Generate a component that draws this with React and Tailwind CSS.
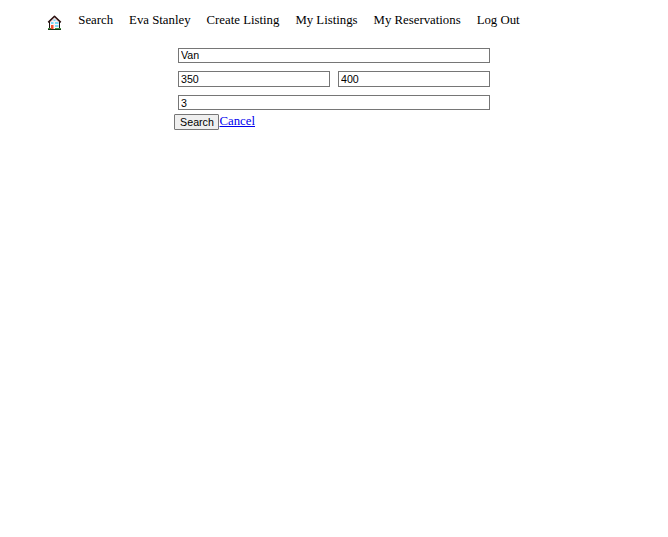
import React from "react";

const links = ["Search", "Eva Stanley", "Create Listing", "My Listings", "My Reservations", "Log Out"];

function House() {
  return (
    <svg width="15" height="15" viewBox="0 0 15 15" className="mt-[15px] block shrink-0" aria-label="Home">
      <path d="M2.500 6.500 7.500 2l5 4.500V14h-10z" fill="#faf3f5" />
      <path d="M2.500 7v7M12.500 7v7" stroke="#1c1212" strokeWidth="1" />
      <path d="M3.200 7 7.500 3l4.300 4" fill="none" stroke="#d9aaa8" strokeWidth="0.700" />
      <path d="M1.200 7.400 7.500 1.200l6.300 6.200" fill="none" stroke="#2a1010" strokeWidth="1.500" strokeLinejoin="round" />
      <path d="M6.500 4.500h2V6h-2zM4 7h2.500v2H4zM8 7h3.500v2H8zM8 10h3.500v2H8z" fill="#7bdcf8" />
      <path d="M4 10h2.500v4H4z" fill="#f2502f" />
      <path d="M1 13h3v1H1zM8 13h6v1H8z" fill="#3f9140" />
      <path d="M1 14.500h13" stroke="#173218" strokeWidth="1" />
    </svg>
  );
}

function Field({ value, className }) {
  return (
    <input
      type="text"
      defaultValue={value}
      className={`block min-w-0 flex-1 rounded-none border border-[#767676] bg-white px-[2px] pt-0 font-['Liberation_Sans',Arial,sans-serif] text-[10.667px] text-black outline-none ${className}`}
    />
  );
}

export default function App() {
  return (
    <div className="h-[537px] w-[668px] overflow-hidden bg-white font-['Liberation_Serif','Times_New_Roman',serif] text-[12.8px] leading-[15px] text-black">
      <nav className="flex h-12 items-start pl-[47px]">
        <House />
        <ul className="ml-[16.3px] mt-[13px] flex gap-[15.98px]">
          {links.map((label) => (
            <li key={label} className="whitespace-nowrap">
              <a href="#">{label}</a>
            </li>
          ))}
        </ul>
      </nav>
      <form className="ml-[174px] w-[320px]">
        <div className="flex flex-col gap-2 px-1">
          <div className="flex"><Field value="Van" className="h-[15px] pb-[2px] leading-[11px]" /></div>
          <div className="flex gap-2">
            <Field value="350" className="h-4 pb-0 leading-[13px]" />
            <Field value="400" className="h-4 pb-0 leading-[13px]" />
          </div>
          <div className="flex"><Field value="3" className="h-[15px] pb-0 leading-[13px]" /></div>
        </div>
        <div className="mt-1 flex items-start">
          <button
            type="button"
            className="flex h-4 w-[45px] items-center justify-center rounded-[1px] border border-[#767676] bg-[#efefef] pl-px font-['Liberation_Sans',Arial,sans-serif] text-[10.667px] leading-[13px]"
          >
            Search
          </button>
          <a href="#" className="ml-[0.5px] text-[#0000ee] underline">Cancel</a>
        </div>
      </form>
    </div>
  );
}
